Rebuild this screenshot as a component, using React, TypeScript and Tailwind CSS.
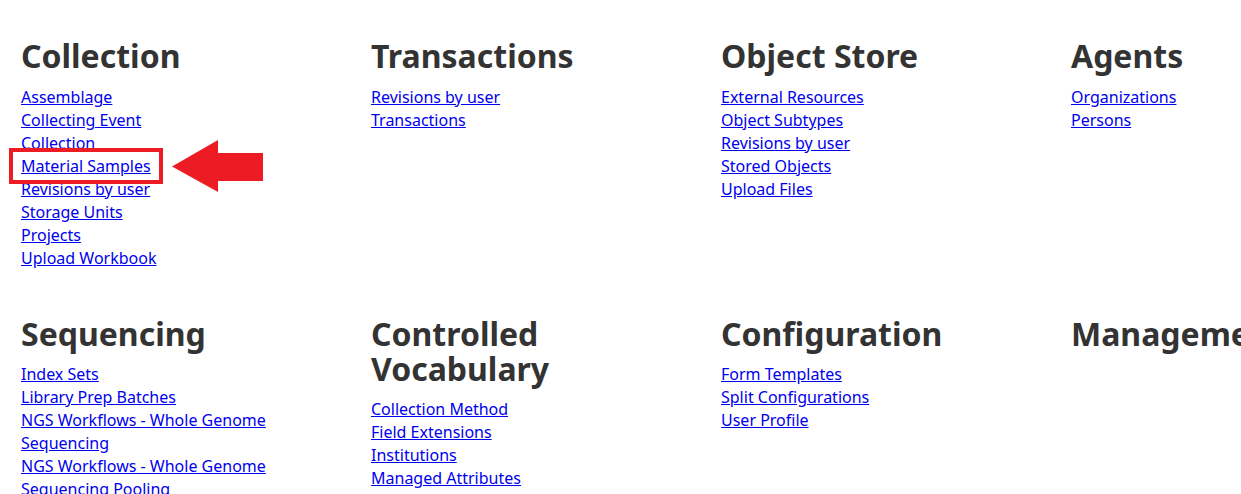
const sections: { title: string; links: string[] }[][] = [
  [
    {
      title: 'Collection',
      links: [
        'Assemblage',
        'Collecting Event',
        'Collection',
        'Material Samples',
        'Revisions by user',
        'Storage Units',
        'Projects',
        'Upload Workbook',
      ],
    },
    { title: 'Transactions', links: ['Revisions by user', 'Transactions'] },
    {
      title: 'Object Store',
      links: ['External Resources', 'Object Subtypes', 'Revisions by user', 'Stored Objects', 'Upload Files'],
    },
    { title: 'Agents', links: ['Organizations', 'Persons'] },
  ],
  [
    {
      title: 'Sequencing',
      links: [
        'Index Sets',
        'Library Prep Batches',
        'NGS Workflows - Whole Genome Sequencing',
        'NGS Workflows - Whole Genome Sequencing Pooling',
      ],
    },
    {
      title: 'Controlled Vocabulary',
      links: ['Collection Method', 'Field Extensions', 'Institutions', 'Managed Attributes'],
    },
    { title: 'Configuration', links: ['Form Templates', 'Split Configurations', 'User Profile'] },
    { title: 'Management', links: [] },
  ],
]

export default function App() {
  return (
    <div
      className="relative w-[1241px] h-[494px] overflow-hidden bg-white"
      style={{ fontFamily: '"Noto Sans", "Open Sans", sans-serif' }}
    >
      <div className="pl-[21px] pt-[38px] flex flex-col gap-y-[46px]">
        {sections.map((row, i) => (
          <div key={i} className="grid grid-cols-[350px_350px_350px_350px]">
            {row.map((s) => (
              <div key={s.title} className="w-[320px]">
                <h2
                  className={
                    'text-[32px] leading-[35px] font-bold text-[#333333] whitespace-nowrap ' +
                    (i === 0 ? 'mb-[13px]' : 'mb-[12px]')
                  }
                >
                  {s.title === 'Controlled Vocabulary' ? (
                    <>
                      Controlled
                      <br />
                      Vocabulary
                    </>
                  ) : (
                    s.title
                  )}
                </h2>
                <ul>
                  {s.links.map((l) => (
                    <li key={l} className="text-[16px] leading-[23px]">
                      <a href="#" className="text-[#0000ee] underline">
                        {l}
                      </a>
                    </li>
                  ))}
                </ul>
              </div>
            ))}
          </div>
        ))}
      </div>

      {/* annotation */}
      <div className="absolute left-[9px] top-[148px] w-[154px] h-[36px] border-[4.5px] border-[#ed1c24]" />
      <svg className="absolute left-0 top-0" width="300" height="220" viewBox="0 0 300 220">
        <polygon points="172,166.5 218,140 218,153 263,153 263,181 218,181 218,192" fill="#ed1c24" />
      </svg>
    </div>
  )
}
